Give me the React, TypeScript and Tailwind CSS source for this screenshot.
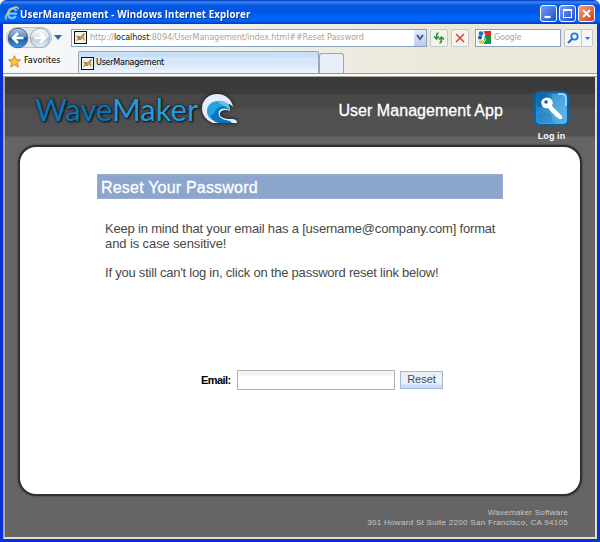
import React from "react";

const tahoma = "font-['DejaVu_Sans_Condensed','DejaVu_Sans',sans-serif] [font-stretch:condensed]";
const arial = "font-['Liberation_Sans',Arial,sans-serif]";

function IeLogo() {
  return (
    <svg width="14" height="15" viewBox="0 0 14 15" fill="none">
      <path d="M11.2 5.1C10.5 2.8 8.3 2 6.4 2.7C3.6 3.7 2.6 7 3.4 9.6C4.2 12.4 8.7 13.3 10.8 9.8" stroke="#66c8ff" strokeWidth="2.3" />
      <path d="M4 7.6H12" stroke="#83d5ff" strokeWidth="2" />
      <path d="M1.4 13.6C-.8 10.4 3.6 4.5 7.6 2.3C10.9.4 14 .5 12.9 3.6" stroke="#f1c64f" strokeWidth="1.4" />
    </svg>
  );
}

function CatIcon() {
  return (
    <svg width="13" height="13" viewBox="0 0 13 13" className="shrink-0">
      <rect x=".5" y=".5" width="12" height="12" fill="#f4f4f1" stroke="#111" />
      <path d="M2 4L4 5L7 5L8.5 3.5L11 2L10 5L10.8 9L8.5 7.5L6.5 9L3.5 8.5L2 10.5L3.2 7Z" fill="#c39b58" />
      <path d="M4 5.5L6 7M8 4.5L10.5 2.5" stroke="#776b55" />
      <path d="M2.5 9.5L4.5 8.5H7M9 8L10 9.5" stroke="#8b8985" fill="none" />
    </svg>
  );
}

function RoundNav({ blue }: { blue?: boolean }) {
  return (
    <svg width="22" height="22" viewBox="0 0 22 22" className="shrink-0">
      <defs>
        <linearGradient id={blue ? "navBlue" : "navPale"} x2="0" y2="1">
          <stop stopColor={blue ? "#b4c7de" : "#f7fafc"} />
          <stop offset=".43" stopColor={blue ? "#668dbd" : "#dfe5ed"} />
          <stop offset=".5" stopColor={blue ? "#17569f" : "#b9c8da"} />
          <stop offset="1" stopColor={blue ? "#3f9cdf" : "#e8f0f9"} />
        </linearGradient>
      </defs>
      <circle cx="11" cy="11" r="9.8" fill={blue ? "url(#navBlue)" : "url(#navPale)"} stroke={blue ? "#48678d" : "#9eabb9"} />
      <path d={blue ? "M16.5 11H6M11 6L6 11L11 16" : "M5.5 11H16M11 6L16 11L11 16"} fill="none" stroke="white" strokeWidth="2.5" />
    </svg>
  );
}

function WaveLogo() {
  return (
    <svg width="38" height="32" viewBox="0 0 38 32" className="ml-[4px] drop-shadow-[0_0_2px_#111]">
      <path d="M11 30C4 27 0 22 0 15C0 7 7 1 15 1C24 1 30 7 31 14C29 12 28 11 26 11C28 14 28 16 28 18C24 16 19 17 18 20C17 24 22 26 29 26C33 26 35 27 35 30Z" fill="#e2eefb" />
      <path d="M5 18C5 12 10 8 16 8C22 8 26 12 28 18C24 14 18 15 17 19C16 24 20 27 26 28H16C9 28 5 24 5 18Z" fill="#2aa1df" />
      <path d="M16 8C20 7 25 9 27 12L28 18C25 14 21 12 18 11Z" fill="#64bee9" />
      <path d="M9 22C14 21 12 17 16 15C20 12 25 13 27 17C22 14 16 16 16 20C16 25 21 27 28 28L30 30H17C12 29 9 26 9 22Z" fill="#0874bb" />
    </svg>
  );
}

function KeyButton() {
  return (
    <svg width="35" height="36" viewBox="0 0 35 36">
      <defs><linearGradient id="tile" x1="0" y1="0" x2="1" y2="1"><stop stopColor="#055fac" /><stop offset=".45" stopColor="#3693d2" /><stop offset="1" stopColor="#63bae9" /></linearGradient></defs>
      <rect x="1" y="1" width="33" height="33" rx="5" fill="url(#tile)" stroke="#0563a7" strokeWidth="2" />
      <path d="M4 5Q4 3 7 3H15V16H3Z" fill="#0865ad" opacity=".55" />
      <path d="M3 24Q12 18 20 27V32H8Q3 32 3 28Z" fill="#1675ba" opacity=".35" />
      <path d="M18 3H29Q32 3 32 7V27Q26 25 18 31Z" fill="#86ccf1" opacity=".25" />
      <path d="M24 3H28Q32 3 32 8V15" fill="none" stroke="#b5dff6" strokeWidth="1.5" />
      <path d="M9 8Q13 5 17 8Q20 11 18 15L28 25V28H25L23 26L21 25L20 23L18 22L14 17Q9 18 8 14Q6 11 9 8Z" fill="white" />
      <circle cx="12" cy="11" r="1.8" fill="#0567ad" />
    </svg>
  );
}

function TitleButton({ kind }: { kind: "min" | "max" | "close" }) {
  return (
    <div className={`flex h-[17px] w-[17px] items-center justify-center rounded-[3px] border border-white ${kind === "close" ? "bg-linear-to-br from-[#f49b79] to-[#ce3d16]" : "bg-linear-to-br from-[#789cf7] to-[#164bd2]"}`}>
      <svg width="13" height="13" viewBox="0 0 13 13" fill="none" stroke="white">
        {kind === "min" && <path d="M2.5 10H8.5" strokeWidth="2.2" />}
        {kind === "max" && <><rect x="2.5" y="2.5" width="8" height="8" /><path d="M2 3H11" strokeWidth="2" /></>}
        {kind === "close" && <path d="M3 3L10 10M10 3L3 10" strokeWidth="2" />}
      </svg>
    </div>
  );
}

export default function App() {
  return (
    <div className="flex h-[542px] w-[600px] flex-col overflow-hidden bg-[#0831d9]">
      <div className="h-6 shrink-0 bg-white">
        <header className="flex h-6 items-center rounded-t-[6px] bg-[linear-gradient(#0830b6_0,#318bfa_2px,#0758df_5px,#0055e5_11px,#0066fc_18px,#0261f8_21px,#073ab8)] pl-[5px] pr-[5px] pt-[3px]">
          <IeLogo />
          <span className="ml-px w-[300px] origin-left scale-x-[0.89] whitespace-nowrap font-['Open_Sans',sans-serif] text-[11px] font-bold leading-4 tracking-[0.1px] text-white [text-shadow:1px_1px_#08318d]">UserManagement - Windows Internet Explorer</span>
          <div className="ml-auto flex gap-[2px]"><TitleButton kind="min" /><TitleButton kind="max" /><TitleButton kind="close" /></div>
        </header>
      </div>

      <div className="mx-[3px] h-[53px] shrink-0 bg-[linear-gradient(90deg,#f7f8fa,#f1f2f2_28%,#ece9db_72%)]">
        <div className="flex h-[26px] items-center pl-[3px] pt-[1px]">
          <div className="flex h-[21px] items-center rounded-full border border-[#c1c3c5] bg-[#e5e6e8]"><RoundNav blue /><RoundNav /></div>
          <svg width="8" height="5" className="ml-[2px]"><path d="M0 0H8L4 5Z" fill="#246bb0" /></svg>
          <div className="ml-[9px] flex h-[18px] w-[356px] items-center border border-[#8ba1bb] bg-white pl-[2px]">
            <CatIcon />
            <span className={`${tahoma} ml-[3px] grow whitespace-nowrap text-[9px] tracking-[-0.12px] text-[#aaa795]`}>http://<b className="font-normal text-[#171717]">localhost</b>:8094/UserManagement/index.html##Reset Password</span>
            <div className="flex h-4 w-3 items-center justify-center bg-linear-to-b from-[#e3edff] to-[#b9ccef]"><svg width="8" height="7"><path d="M1 1L4 5L7 1" stroke="#49617f" strokeWidth="2" fill="none" /></svg></div>
          </div>
          <div className="ml-[3px] flex h-[18px] w-[18px] items-center justify-center rounded-[2px] border border-[#c5c8c9] bg-[#f4f3ed]"><svg width="12" height="12" viewBox="0 0 12 12" fill="none" stroke="#25902a" strokeWidth="1.5"><path d="M5.5 1C3.5 1 3.5 3 3.5 7M1 4.5L3.5 7L6 4.5M6.5 11C8.5 11 8.5 9 8.5 5M6 7.5L8.5 5L11 7.5" /></svg></div>
          <div className="ml-[3px] flex h-[18px] w-[18px] items-center justify-center rounded-[2px] border border-[#c5c8c9] bg-[#f4f3ed]"><svg width="10" height="10"><path d="M1 1L9 9M9 1L1 9" stroke="#d44342" strokeWidth="1.5" /></svg></div>
          <div className="ml-[6px] flex h-[18px] w-[86px] items-center border border-[#8ba1bb] bg-white pl-[1px]">
            <svg width="15" height="15" viewBox="0 0 15 15"><path d="M0 1H7V14H0Z" fill="#edf2fa" /><path d="M7 1H14V6H8Z" fill="#e22b24" /><path d="M7 6H14V14H7Z" fill="#159346" /><circle cx="4" cy="3.5" r="2.3" fill="#2870bf" /><circle cx="3" cy="7.5" r="2" fill="#1f5aae" /><ellipse cx="4.5" cy="12" rx="2.8" ry="1.8" fill="#edb72e" /><path d="M8 4C5 8 11 9 7 12" stroke="white" fill="none" /></svg>
            <span className={`${tahoma} ml-[2px] text-[9px] tracking-[-0.2px] text-[#aaa795]`}>Google</span>
          </div>
          <div className="ml-[3px] flex h-[18px] w-[29px] items-center rounded-[2px] border border-[#c0c7ce] bg-[#f4f5f4]"><svg width="16" height="14"><circle cx="9.5" cy="5.5" r="3.2" fill="#e8f4ff" stroke="#2674e2" strokeWidth="1.8" /><path d="M7 8L3 12" stroke="#1e66d6" strokeWidth="2" /></svg><i className="h-4 w-px bg-[#c0c7ce]" /><svg width="10" height="8"><path d="M3 3H8L5.5 6Z" fill="#2871e0" /></svg></div>
        </div>
        <div className="flex h-[24px] items-end border-b border-[#8b9cae]">
          <div className="flex h-6 w-[75px] items-center pl-[5px] pt-px">
            <svg width="13" height="13" viewBox="0 0 14 14"><path d="M7 .8L8.9 5L13.4 5.3L10 8.3L11.1 13L7 10.4L2.9 13L4 8.3L.6 5.3L5.1 5Z" fill="#ffc43b" stroke="#d1811b" /></svg>
            <span className={`${tahoma} ml-[3px] pb-px text-[9px] text-black`}>Favorites</span>
          </div>
          <div className="flex h-[22px] w-[241px] items-center rounded-t-[2px] border border-b-0 border-[#9ba7b5] bg-[linear-gradient(#c8dff8_0_24%,#d7e6f8_25%_55%,#edf4fc)] pl-[2px] pt-px"><CatIcon /><span className={`${tahoma} ml-[2px] text-[9px] tracking-[-0.28px] text-black`}>UserManagement</span></div>
          <div className="h-[20px] w-[25px] rounded-t-[3px] border border-b-0 border-[#9ba7b5] bg-[#e8eef7]" />
        </div>
        <div className="h-[3px] bg-[linear-gradient(#fbfbf8_0_2px,#aaa99b_2px)]" />
      </div>

      <main className={`${arial} mx-[3px] flex h-[462px] shrink-0 flex-col border-x-2 border-b-2 border-[#e0decf] border-l-[#aaa99b] bg-[linear-gradient(#3b3b3b_0_16px,#484848_18px_31px,#505050_32px_58px,#656565_61px)]`}>
        <div className="flex h-[68px] items-start pl-[30px]">
          <div className="flex items-center pt-[16px]">
            <span className="font-['Lato',sans-serif] text-[31px] leading-8 tracking-[0px] text-[#0876bd] [text-shadow:0_0_3px_#111,1px_1px_2px_#111]">Wave<span className="text-[#249bdc]">Maker</span></span><WaveLogo />
          </div>
          <div className="ml-auto pr-[31px] pt-[23px] text-[16px] leading-[22px] tracking-[0.05px] text-white [-webkit-text-stroke:0.3px_white]">User Management App</div>
          <div className="mr-[26px] flex w-[35px] flex-col items-center pt-[14px]"><KeyButton /><span className="mt-[3px] whitespace-nowrap text-[9px] font-bold leading-3 tracking-[0.1px] text-white">Log in</span></div>
        </div>

        <section className="ml-[13px] h-[351px] w-[564px] rounded-[18px] border-2 border-[#303030] bg-white shadow-[0_0_2px_#333]">
          <div className="ml-[77px] mt-[27px] flex h-[25px] w-[406px] items-center border border-[#9aabce] bg-[#8ba5cd] px-[3px] pt-[3px] text-[16px] leading-none tracking-[0.2px] text-white [-webkit-text-stroke:0.3px_white]">Reset Your Password</div>
          <div className="ml-[85px] mt-[22px] whitespace-nowrap text-[13px] leading-[15px] text-[#484848]">
            <p className="tracking-[-0.19px]">Keep in mind that your email has a [username@company.com] format</p><p className="tracking-[-0.1px]">and is case sensitive!</p>
            <p className="mt-[14px] tracking-[-0.22px]">If you still can't log in, click on the password reset link below!</p>
          </div>
          <div className="ml-[181px] mt-[90px] flex h-5 items-center">
            <label htmlFor="email" className="w-[36px] whitespace-nowrap text-[11px] font-bold tracking-[-0.55px] text-black">Email:</label>
            <input id="email" className="h-5 w-[158px] border border-[#b3b3b3] bg-[linear-gradient(#f0f3f7_0_4px,white_5px)] outline-none" />
            <button className="ml-[5px] flex h-[18px] w-[43px] items-center justify-center border border-[#a3b8d6] bg-[linear-gradient(#edf0f3_0_12px,#c5ddfb_13px)] pb-px text-[11px] leading-none text-[#354c76]">Reset</button>
          </div>
        </section>
        <footer className="mr-[27px] mt-[12px] text-right text-[8px] leading-[10px] tracking-[0.3px] text-[#c8c8c8]"><p className="tracking-[0.22px]">Wavemaker Software</p><p>301 Howard St Suite 2200 San Francisco, CA 94105</p></footer>
      </main>
    </div>
  );
}
